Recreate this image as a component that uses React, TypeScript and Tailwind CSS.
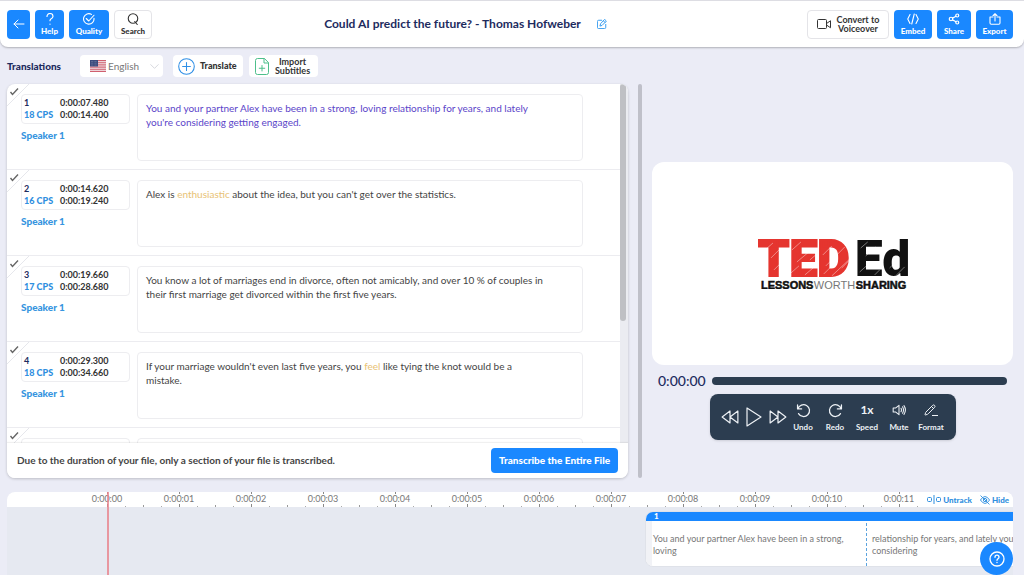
import type { ReactNode } from "react";
import { Pencil } from "lucide-react";

const captions = [
	{
		id: 1,
		start: "0:00:07.480",
		end: "0:00:14.400",
		cps: 18,
		active: true,
		text: "You and your partner Alex have been in a strong, loving relationship for years, and lately you're considering getting engaged.",
	},
	{
		id: 2,
		start: "0:00:14.620",
		end: "0:00:19.240",
		cps: 16,
		highlight: "enthusiastic",
		text: "Alex is enthusiastic about the idea, but you can't get over the statistics.",
	},
	{
		id: 3,
		start: "0:00:19.660",
		end: "0:00:28.680",
		cps: 17,
		text: "You know a lot of marriages end in divorce, often not amicably, and over 10 % of couples in their first marriage get divorced within the first five years.",
	},
	{
		id: 4,
		start: "0:00:29.300",
		end: "0:00:34.660",
		cps: 18,
		highlight: "feel",
		text: "If your marriage wouldn't even last five years, you feel like tying the knot would be a mistake.",
	},
	{ id: 5, text: "" },
];

type Caption = (typeof captions)[number];

const seconds = ["00", "01", "02", "03", "04", "05", "06", "07", "08", "09", "10", "11"];

function Icon({ className, width = 2, children }: { className: string; width?: number; children: ReactNode }) {
	return (
		<svg
			className={className}
			viewBox="0 0 24 24"
			fill="none"
			stroke="currentColor"
			strokeWidth={width}
			strokeLinecap="round"
			strokeLinejoin="round"
			aria-hidden="true"
		>
			{children}
		</svg>
	);
}

function HeaderButton({ label, className, children }: { label: string; className: string; children: ReactNode }) {
	return (
		<button className={`flex h-[29px] flex-col items-center justify-center gap-px rounded text-[8px] leading-[10px] font-black ${className}`}>
			{children}
			<span>{label}</span>
		</button>
	);
}

function Header() {
	return (
		<header className="flex h-[47px] shrink-0 items-center justify-between rounded-b-lg border-t border-[#dddde3] bg-white pr-[11px] pl-[7px] shadow-[0_1px_2px_rgba(0,0,0,0.25)]">
			<div className="flex gap-[5px]">
				<button aria-label="Back" className="flex h-[29px] w-[23px] items-center justify-center rounded bg-[#1a88ff] text-white">
					<Icon className="size-3" width={2}>
						<path d="M22 12H2M10 4l-8 8 8 8" />
					</Icon>
				</button>
				<HeaderButton label="Help" className="w-[29px] bg-[#1a88ff] text-white">
					<Icon className="size-3" width={2.4}>
						<path d="M6 7c0-3.500 2.600-6 6-6s6 2.500 6 5.600c0 3-2.400 4.400-4.200 5.400-1.300.8-1.800 1.500-1.800 3.500M12 22v.4" />
					</Icon>
				</HeaderButton>
				<HeaderButton label="Quality" className="w-10 bg-[#1a88ff] text-white">
					<Icon className="size-3" width={2.2}>
						<path d="M22 10.500A10.500 10.500 0 1 1 17 2.800" />
						<path d="M6.500 11l5 5L22 4.500" />
					</Icon>
				</HeaderButton>
				<HeaderButton label="Search" className="w-[38px] border border-[#e4e4e8] bg-white text-[#333]">
					<Icon className="size-3" width={2.2}>
						<circle cx="12" cy="11" r="9.500" />
						<path d="M15.500 17l5 6" />
					</Icon>
				</HeaderButton>
			</div>
			<div className="flex items-center gap-4 pr-7">
				<h1 className="text-[12px] leading-4 font-bold text-[#1d2b5e]">Could AI predict the future? - Thomas Hofweber</h1>
				<button aria-label="Edit title" className="text-[#3a9ef0]">
					<Icon className="size-[10px]" width={2.400}>
						<path d="M11 3H4a3 3 0 0 0-3 3v14a3 3 0 0 0 3 3h14a3 3 0 0 0 3-3v-7" />
						<path d="M19 1.500l3.500 3.500L12 15.500l-5 1.500 1.500-5z" />
						<path d="M16 5l3.500 3.500" />
					</Icon>
				</button>
			</div>
			<div className="flex gap-[5px]">
				<button className="flex h-[29px] w-[82px] items-center justify-center gap-[5px] rounded border border-[#e4e4e8] bg-white text-[9px] leading-[9px] font-bold text-[#333]">
					<svg className="h-[10px] w-[15px]" viewBox="0 0 30 20" fill="none" stroke="currentColor" strokeWidth="2" strokeLinejoin="round" aria-hidden="true">
						<rect x="1" y="1" width="18" height="18" rx="2" />
						<path d="M19 9l8-5.500v14L19 12" />
					</svg>
					<span>
						Convert to
						<br />
						Voiceover
					</span>
				</button>
				<HeaderButton label="Embed" className="w-[38px] bg-[#1a88ff] text-white">
					<Icon className="size-3" width={2.2}>
						<path d="M6 3L1.500 12 6 21M18 3l4.500 9L18 21M14.500 2l-5 20" />
					</Icon>
				</HeaderButton>
				<HeaderButton label="Share" className="w-[34px] bg-[#1a88ff] text-white">
					<Icon className="size-3" width={2.4}>
						<circle cx="6" cy="12" r="3.500" />
						<circle cx="18.500" cy="5" r="3" />
						<circle cx="18.500" cy="19" r="3" />
						<path d="M9 10.300l7-3.800M9 13.700l7 3.800" />
					</Icon>
				</HeaderButton>
				<HeaderButton label="Export" className="w-[37px] bg-[#1a88ff] text-white">
					<Icon className="size-3" width={2.2}>
						<path d="M8 8H2v12a2.500 2.500 0 0 0 2.500 2.500h15A2.500 2.500 0 0 0 22 20V8h-6" />
						<path d="M12 16V1.500M8 5.500l4-4 4 4" />
					</Icon>
				</HeaderButton>
			</div>
		</header>
	);
}

function Flag() {
	return (
		<svg className="h-3 w-4 shrink-0" viewBox="0 0 16 12" aria-hidden="true">
			<rect width="16" height="12" fill="#f4eff2" />
			<path d="M0 .5h16M0 2.300h16M0 4.200h16M0 6h16M0 7.800h16M0 9.700h16M0 11.500h16" stroke="#d0606f" strokeWidth="1" />
			<rect width="8" height="6.500" fill="#3c4a7c" />
			<path d="M1 1.500h6M1 3.200h6M1 5h6" stroke="#98a0c0" strokeWidth=".6" strokeDasharray=".6 .8" />
		</svg>
	);
}

function Toolbar() {
	return (
		<div className="flex h-[22px] shrink-0 items-center">
			<h2 className="w-[73px] text-[10px] font-black text-[#1d2b5e]">Translations</h2>
			<div className="flex h-full w-[83px] items-center gap-[2px] rounded-sm bg-white pr-1 pl-[10px]">
				<Flag />
				<select aria-label="Language" className="min-w-0 grow appearance-none bg-transparent text-[10px] text-[#777]">
					<option>English</option>
				</select>
				<Icon className="size-[9px] shrink-0 text-[#c9ccd3]" width={2}>
					<path d="M2 7l10 10L22 7" />
				</Icon>
			</div>
			<button className="ml-[10px] flex h-full w-[70px] items-center gap-[5px] rounded-sm bg-white pl-[5px] text-[9px] font-black text-[#333]">
				<Icon className="size-[17px] text-[#2f8fe6]" width={1.500}>
					<circle cx="12" cy="12" r="11" />
					<path d="M12 6.500v11M6.500 12h11" />
				</Icon>
				Translate
			</button>
			<button className="ml-[6px] flex h-full w-[69px] items-center gap-[6px] rounded-sm bg-white pl-[6px] text-[9px] leading-[9px] font-bold text-[#333]">
				<svg className="h-[17px] w-[14px]" viewBox="0 0 28 34" fill="none" stroke="#4dbf8b" strokeWidth="2" strokeLinejoin="round" strokeLinecap="round" aria-hidden="true">
					<path d="M18 1H5a4 4 0 0 0-4 4v24a4 4 0 0 0 4 4h18a4 4 0 0 0 4-4V10zM18 1v9h9M14 15v11M8.500 20.500h11" />
				</svg>
				<span>
					Import
					<br />
					Subtitles
				</span>
			</button>
		</div>
	);
}

function CaptionText({ caption }: { caption: Caption }) {
	const box = "h-[67px] w-[446px] resize-none overflow-hidden rounded border border-[#ededf0] bg-white py-[6px] pr-9 pl-2 text-[10px] leading-[14px]";

	if (!caption.highlight) {
		return (
			<textarea
				aria-label={`Caption ${caption.id}`}
				className={`${box} ${caption.active ? "text-[#5b45c9]" : "text-[#444]"}`}
				defaultValue={caption.text}
			/>
		);
	}

	const [before, after] = caption.text.split(caption.highlight);
	return (
		<div role="textbox" aria-label={`Caption ${caption.id}`} contentEditable suppressContentEditableWarning className={`${box} text-[#444]`}>
			{before}
			<span className="text-[#e8c274]">{caption.highlight}</span>
			{after}
		</div>
	);
}

function CaptionRow({ caption }: { caption: Caption }) {
	return (
		<li className="relative flex h-[86px] shrink-0 gap-[7px] border-b border-[#ececf0] pt-[10px] pl-[14px]">
			<svg className="absolute top-0 left-0 size-[22px]" viewBox="0 0 22 22" fill="none" aria-hidden="true">
				<path d="M0 22L22 0" stroke="#e6e7ec" />
				<path d="M3.500 8l2 2.500L11 4.500" stroke="#666" strokeWidth="1.400" />
			</svg>
			<div className="w-[109px]">
				<div className="grid h-[30px] grid-cols-[36px_1fr] content-center rounded border border-[#ededf0] bg-white pl-[2px] text-[9px] leading-[12px] font-bold text-[#333]">
					{caption.start && (
						<>
							<span className="text-[#1d2b5e]">{caption.id}</span>
							<span>{caption.start}</span>
							<span className="font-black whitespace-nowrap text-[#2f8fe0]">{caption.cps} CPS</span>
							<span>{caption.end}</span>
						</>
					)}
				</div>
				{caption.start && <button className="mt-1 block text-[10px] leading-[14px] font-black text-[#3795e0]">Speaker 1</button>}
			</div>
			<CaptionText caption={caption} />
		</li>
	);
}

function CaptionPanel() {
	return (
		<section className="flex min-h-0 flex-col overflow-hidden rounded-lg bg-white shadow-[0_1px_3px_rgba(0,0,0,0.2)]">
			<div className="flex min-h-0 grow">
				<ul className="flex min-w-0 grow flex-col overflow-hidden">
					{captions.map((caption) => (
						<CaptionRow key={caption.id} caption={caption} />
					))}
				</ul>
				<div className="w-2 shrink-0 bg-[#ebecf1]">
					<div className="h-[66%] w-[6px] rounded-full bg-[#bfc0c4]" />
				</div>
			</div>
			<div className="relative flex h-[35px] shrink-0 items-center justify-between bg-white pr-[10px] pl-[10px] shadow-[0_-1px_1px_rgba(0,0,0,0.06)]">
				<p className="text-[10px] font-bold text-[#444]">Due to the duration of your file, only a section of your file is transcribed.</p>
				<button className="h-[25px] w-[127px] rounded bg-[#1a88ff] text-[10px] font-black text-white">Transcribe the Entire File</button>
			</div>
		</section>
	);
}

function VideoLogo() {
	return (
		<svg className="w-[42%]" viewBox="0 0 152 52" role="img" aria-label="TED Ed, lessons worth sharing">
			<g fontFamily="Roboto" fontWeight="900" fontSize="50">
				<text x="1" y="38" fill="#e5352f" stroke="#e5352f" strokeWidth="1.800">TED</text>
				<text x="98" y="38" fill="#111">Ed</text>
			</g>
			<path
				d="M8 12l8-7M14 20l9-9M17 32l7-7M35 12l9-8M40 24l12-10M33 36l9-8M48 37l13-11M53 22l7-6M67 36l14-14M69 28l19-19M75 38l17-16M66 17l9-9M85 30l8-8M104 10l7-6M109 18l10-9M103 34l9-8M118 37l5-5M133 30l9-9M140 37l8-8"
				stroke="#fff"
				strokeWidth=".6"
				opacity=".7"
			/>
			<g fontFamily="Liberation Sans" fontSize="11" fill="#111">
				<text x="4" y="51" fontWeight="700" stroke="#111" strokeWidth=".5">LESSONS</text>
				<text x="57" y="51" fill="#777">WORTH</text>
				<text x="99" y="51" fontWeight="700" stroke="#111" strokeWidth=".5">SHARING</text>
			</g>
		</svg>
	);
}

function ControlButton({ label, children }: { label: string; children: ReactNode }) {
	return (
		<button className="flex w-8 flex-col items-center gap-1 text-[8px] leading-[10px] font-bold">
			<span className="flex h-4 items-center text-[12px] font-bold">{children}</span>
			{label}
		</button>
	);
}

function Player() {
	return (
		<section className="flex flex-col pt-[78px]">
			<div className="flex aspect-video items-center justify-center rounded-xl bg-white">
				<VideoLogo />
			</div>
			<div className="mt-[5px] flex h-[22px] items-center gap-[6px] px-[6px]">
				<span className="text-[14px] leading-5 font-medium text-[#1d2b5e]">0:00:00</span>
				<div className="h-2 grow rounded-full bg-[#2c3d50]" />
			</div>
			<div className="mt-[2px] ml-[58px] flex h-[46px] w-[246px] items-center rounded-lg bg-[#2c3d50] pr-[8px] pl-[11px] text-[#eef2f6] shadow">
				<div className="flex w-[66px] items-center justify-between">
					<button aria-label="Rewind">
						<Icon className="size-[18px]" width={1.600}>
							<path d="M12 4v16L1.500 12zM22.500 4v16L12 12z" />
						</Icon>
					</button>
					<button aria-label="Play">
						<svg className="h-5 w-4" viewBox="0 0 16 20" fill="none" stroke="currentColor" strokeWidth="1.200" strokeLinejoin="round">
							<path d="M1 1v18l14-9z" />
						</svg>
					</button>
					<button aria-label="Fast forward">
						<Icon className="size-[18px]" width={1.600}>
							<path d="M1.500 4v16L12 12zM12 4v16l10.500-8z" />
						</Icon>
					</button>
				</div>
				<div className="flex">
					<ControlButton label="Undo">
						<Icon className="size-[15px]" width={2}>
							<path d="M2.500 3v6.500H9M3 9.500A9.500 9.500 0 1 1 4 17" />
						</Icon>
					</ControlButton>
					<ControlButton label="Redo">
						<Icon className="size-[15px]" width={2}>
							<path d="M21.500 3v6.500H15M21 9.500A9.500 9.500 0 1 0 20 17" />
						</Icon>
					</ControlButton>
					<ControlButton label="Speed">1x</ControlButton>
					<ControlButton label="Mute">
						<Icon className="size-[14px]" width={1.800}>
							<path d="M2 8.500h4.500L12 4v16l-5.500-4.500H2zM15.500 9q1.500 3 0 6M18 6.500q3.500 5.500 0 11M20.500 4.500q5 7.500 0 15" />
						</Icon>
					</ControlButton>
					<ControlButton label="Format">
						<span className="flex items-end">
							<Pencil className="size-3" strokeWidth={2} />
							<span className="-ml-1 h-px w-[6px] bg-current" />
						</span>
					</ControlButton>
				</div>
			</div>
		</section>
	);
}

function Ruler() {
	return (
		<div className="flex h-[15px] bg-white pl-[64px]">
			{seconds.map((second, i) => (
				<div key={second} className="flex w-[72px] shrink-0 flex-col items-center">
					<span className="h-[2px] w-px bg-[#888]" />
					<span className="text-[9px] leading-[10px] text-[#777]">0:00:{second}</span>
					<div className="flex h-[3px] w-full items-end">
						<span className={`h-[2px] w-[18px] border-l border-[#999] ${i === 0 ? "invisible" : ""}`} />
						<span className={`h-px w-[18px] border-l border-[#aaa] ${i === 0 ? "invisible" : ""}`} />
						<span className="h-[3px] w-[18px] border-l border-[#888]" />
						<span className="h-px w-[18px] border-l border-[#aaa]" />
					</div>
				</div>
			))}
		</div>
	);
}

function Timeline() {
	return (
		<section className="relative mr-[11px] ml-[7px] h-[83px] shrink-0 overflow-hidden rounded-t-lg bg-[#e6e9f1]">
			<Ruler />
			<div className="absolute top-0 right-0 flex h-[15px] items-center gap-2 bg-white pr-1 pl-2 text-[8px] font-black text-[#2f8fe0]">
				<button className="flex items-center gap-[2px]">
					<svg className="h-[9px] w-[14px]" viewBox="0 0 28 18" fill="none" stroke="currentColor" strokeWidth="2">
						<rect x="1" y="5" width="8" height="8" rx="2" />
						<path d="M14 0v18" />
						<rect x="19" y="5" width="8" height="8" rx="2" />
					</svg>
					Untrack
				</button>
				<button className="flex items-center gap-[2px]">
					<Icon className="size-[10px]" width={2.200}>
						<path d="M1 12q11-17 22 0-11 17-22 0M2 2l20 20" />
						<circle cx="12" cy="12" r="4" />
					</Icon>
					Hide
				</button>
			</div>
			<div className="mt-1 ml-[638px] w-[498px] overflow-hidden rounded-lg border border-[#dfe2e9] bg-white">
				<div className="h-[9px] bg-[#1a88ff] pl-2 text-[8px] leading-[9px] font-black text-white">1</div>
				<div className="flex h-[45px] border-l-[6px] border-[#f1f2f6] pt-[2px] text-[9px] leading-[12px] text-[#777]">
					<p className="w-[215px] shrink-0 border-r border-dashed border-[#5aa3df] pt-[10px] pr-4 pl-px">You and your partner Alex have been in a strong, loving</p>
					<p className="w-[160px] pt-[10px] pl-[5px]">relationship for years, and lately you're considering</p>
				</div>
			</div>
			<div className="absolute top-0 left-[100px] h-full w-[2px] bg-[#e9828c]/80" />
		</section>
	);
}

export default function App() {
	return (
		<div className="flex h-screen flex-col overflow-hidden bg-[#ebecf6] font-['Lato',sans-serif]">
			<Header />
			<main className="flex min-h-0 grow flex-col pt-2 pr-[11px] pb-[14px] pl-[7px]">
				<Toolbar />
				<div className="mt-[7px] grid min-h-0 grow grid-cols-[621fr_4px_361fr] gap-[10px]">
					<CaptionPanel />
					<div className="rounded-full bg-[#bfc0c9]" />
					<Player />
				</div>
			</main>
			<Timeline />
			<button aria-label="Help center" className="fixed right-[11px] bottom-0 flex size-[33px] items-center justify-center rounded-full bg-[#1a88ff] text-white">
				<Icon className="size-4" width={2}>
					<circle cx="12" cy="12" r="10.500" />
					<path d="M9 9.500c0-1.900 1.300-3.200 3-3.200s3 1.200 3 2.900c0 2.300-3 2.300-3 4.800M12 17v.2" />
				</Icon>
			</button>
		</div>
	);
}
